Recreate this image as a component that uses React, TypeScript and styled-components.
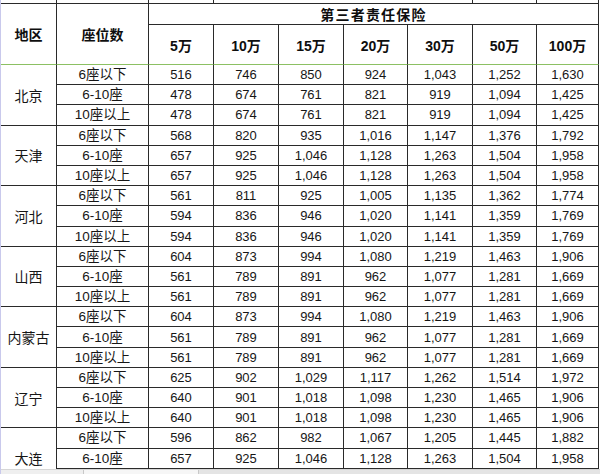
import React from "react";
import styled, { createGlobalStyle } from "styled-components";

const Global = createGlobalStyle`
  html, body { margin: 0; padding: 0; background: #ffffff; }
  body { font-family: "Liberation Sans", "Noto Sans CJK SC", Arial, sans-serif; }
`;

const Sheet = styled.div`
  position: relative;
  width: 600px;
  height: 474px;
  overflow: hidden;
  background: #ffffff;
  box-sizing: border-box;
  border-left: 1px solid #c9c9ec;
`;

const Table = styled.table`
  border-collapse: separate;
  border-spacing: 0;
  table-layout: fixed;
  width: 598px;
  color: #161616;
  font-family: "Liberation Sans", "Noto Sans CJK SC", Arial, sans-serif;
`;

const StripCell = styled.td`
  height: 4px;
  padding: 0;
  font-size: 0;
  line-height: 0;
  box-sizing: border-box;
  border-right: 1px solid #2a2a2a;
  border-bottom: 1px solid #2a2a2a;
`;

const HeadCell = styled.th<{ $h: number; $green?: boolean; $spaced?: boolean }>`
  height: ${(p) => p.$h}px;
  padding: 0;
  box-sizing: border-box;
  font-size: 14px;
  font-weight: bold;
  color: #0e0e0e;
  text-align: center;
  vertical-align: middle;
  letter-spacing: ${(p) => (p.$spaced ? "1.2px" : "0")};
  border-right: 1px solid #2a2a2a;
  border-bottom: 1px solid ${(p) => (p.$green ? "#8cc063" : "#2a2a2a")};
`;

const Row = styled.tr`
  height: 20.2px;
`;

const Region = styled.td`
  padding: 0;
  box-sizing: border-box;
  font-size: 14px;
  text-align: center;
  vertical-align: middle;
  border-right: 1px solid #2a2a2a;
  border-bottom: 1px solid #2a2a2a;
`;

const Cell = styled.td<{ $label?: boolean }>`
  padding: 0;
  box-sizing: border-box;
  font-size: ${(p) => (p.$label ? "13.5px" : "13px")};
  line-height: 15px;
  text-align: center;
  vertical-align: middle;
  white-space: nowrap;
  border-right: 1px solid #2a2a2a;
  border-bottom: 1px solid #2a2a2a;
`;

const ScrollBar = styled.div`
  position: absolute;
  left: 0;
  right: 0;
  bottom: 0;
  height: 4px;
  display: flex;
  background: #e4e4e4;
  border-top: 1px solid #d6d6d6;
`;

const ScrollPart = styled.div<{ $w: number; $bg: string }>`
  width: ${(p) => p.$w}px;
  background: ${(p) => p.$bg};
  border-right: 1px solid #c8c8c8;
`;

const widths = [56, 92, 65, 65, 65, 64, 65, 64, 62];
const amounts = ["5万", "10万", "15万", "20万", "30万", "50万", "100万"];
const seats = ["6座以下", "6-10座", "10座以上"];

type RegionData = { name: string; rows: string[][] };

const bjA = ["516", "746", "850", "924", "1,043", "1,252", "1,630"];
const bjB = ["478", "674", "761", "821", "919", "1,094", "1,425"];
const tjA = ["568", "820", "935", "1,016", "1,147", "1,376", "1,792"];
const tjB = ["657", "925", "1,046", "1,128", "1,263", "1,504", "1,958"];
const hbA = ["561", "811", "925", "1,005", "1,135", "1,362", "1,774"];
const hbB = ["594", "836", "946", "1,020", "1,141", "1,359", "1,769"];
const sxA = ["604", "873", "994", "1,080", "1,219", "1,463", "1,906"];
const sxB = ["561", "789", "891", "962", "1,077", "1,281", "1,669"];
const lnA = ["625", "902", "1,029", "1,117", "1,262", "1,514", "1,972"];
const lnB = ["640", "901", "1,018", "1,098", "1,230", "1,465", "1,906"];
const dlA = ["596", "862", "982", "1,067", "1,205", "1,445", "1,882"];

const regions: RegionData[] = [
  { name: "北京", rows: [bjA, bjB, bjB] },
  { name: "天津", rows: [tjA, tjB, tjB] },
  { name: "河北", rows: [hbA, hbB, hbB] },
  { name: "山西", rows: [sxA, sxB, sxB] },
  { name: "内蒙古", rows: [sxA, sxB, sxB] },
  { name: "辽宁", rows: [lnA, lnB, lnB] },
  { name: "大连", rows: [dlA, tjB, tjB] },
];

export default function App() {
  return (
    <>
      <Global />
      <Sheet>
        <Table>
          <colgroup>
            {widths.map((w, i) => (
              <col key={i} style={{ width: w }} />
            ))}
          </colgroup>
          <thead>
            <tr>
              <StripCell />
              <StripCell />
              <StripCell />
              <StripCell colSpan={4} />
              <StripCell />
              <StripCell />
            </tr>
            <tr>
              <HeadCell $h={20} rowSpan={2} $green>
                地区
              </HeadCell>
              <HeadCell $h={20} rowSpan={2} $green>
                座位数
              </HeadCell>
              <HeadCell $h={20} colSpan={7} $spaced>
                第三者责任保险
              </HeadCell>
            </tr>
            <tr>
              {amounts.map((a) => (
                <HeadCell key={a} $h={40} $green>
                  {a}
                </HeadCell>
              ))}
            </tr>
          </thead>
          <tbody>
            {regions.map((r) =>
              r.rows.map((vals, i) => (
                <Row key={r.name + i}>
                  {i === 0 && <Region rowSpan={3}>{r.name}</Region>}
                  <Cell $label>{seats[i]}</Cell>
                  {vals.map((v, j) => (
                    <Cell key={j}>{v}</Cell>
                  ))}
                </Row>
              ))
            )}
          </tbody>
        </Table>
        <ScrollBar>
          <ScrollPart $w={82} $bg="#efefef" />
          <ScrollPart $w={114} $bg="#f6f6f6" />
        </ScrollBar>
      </Sheet>
    </>
  );
}
